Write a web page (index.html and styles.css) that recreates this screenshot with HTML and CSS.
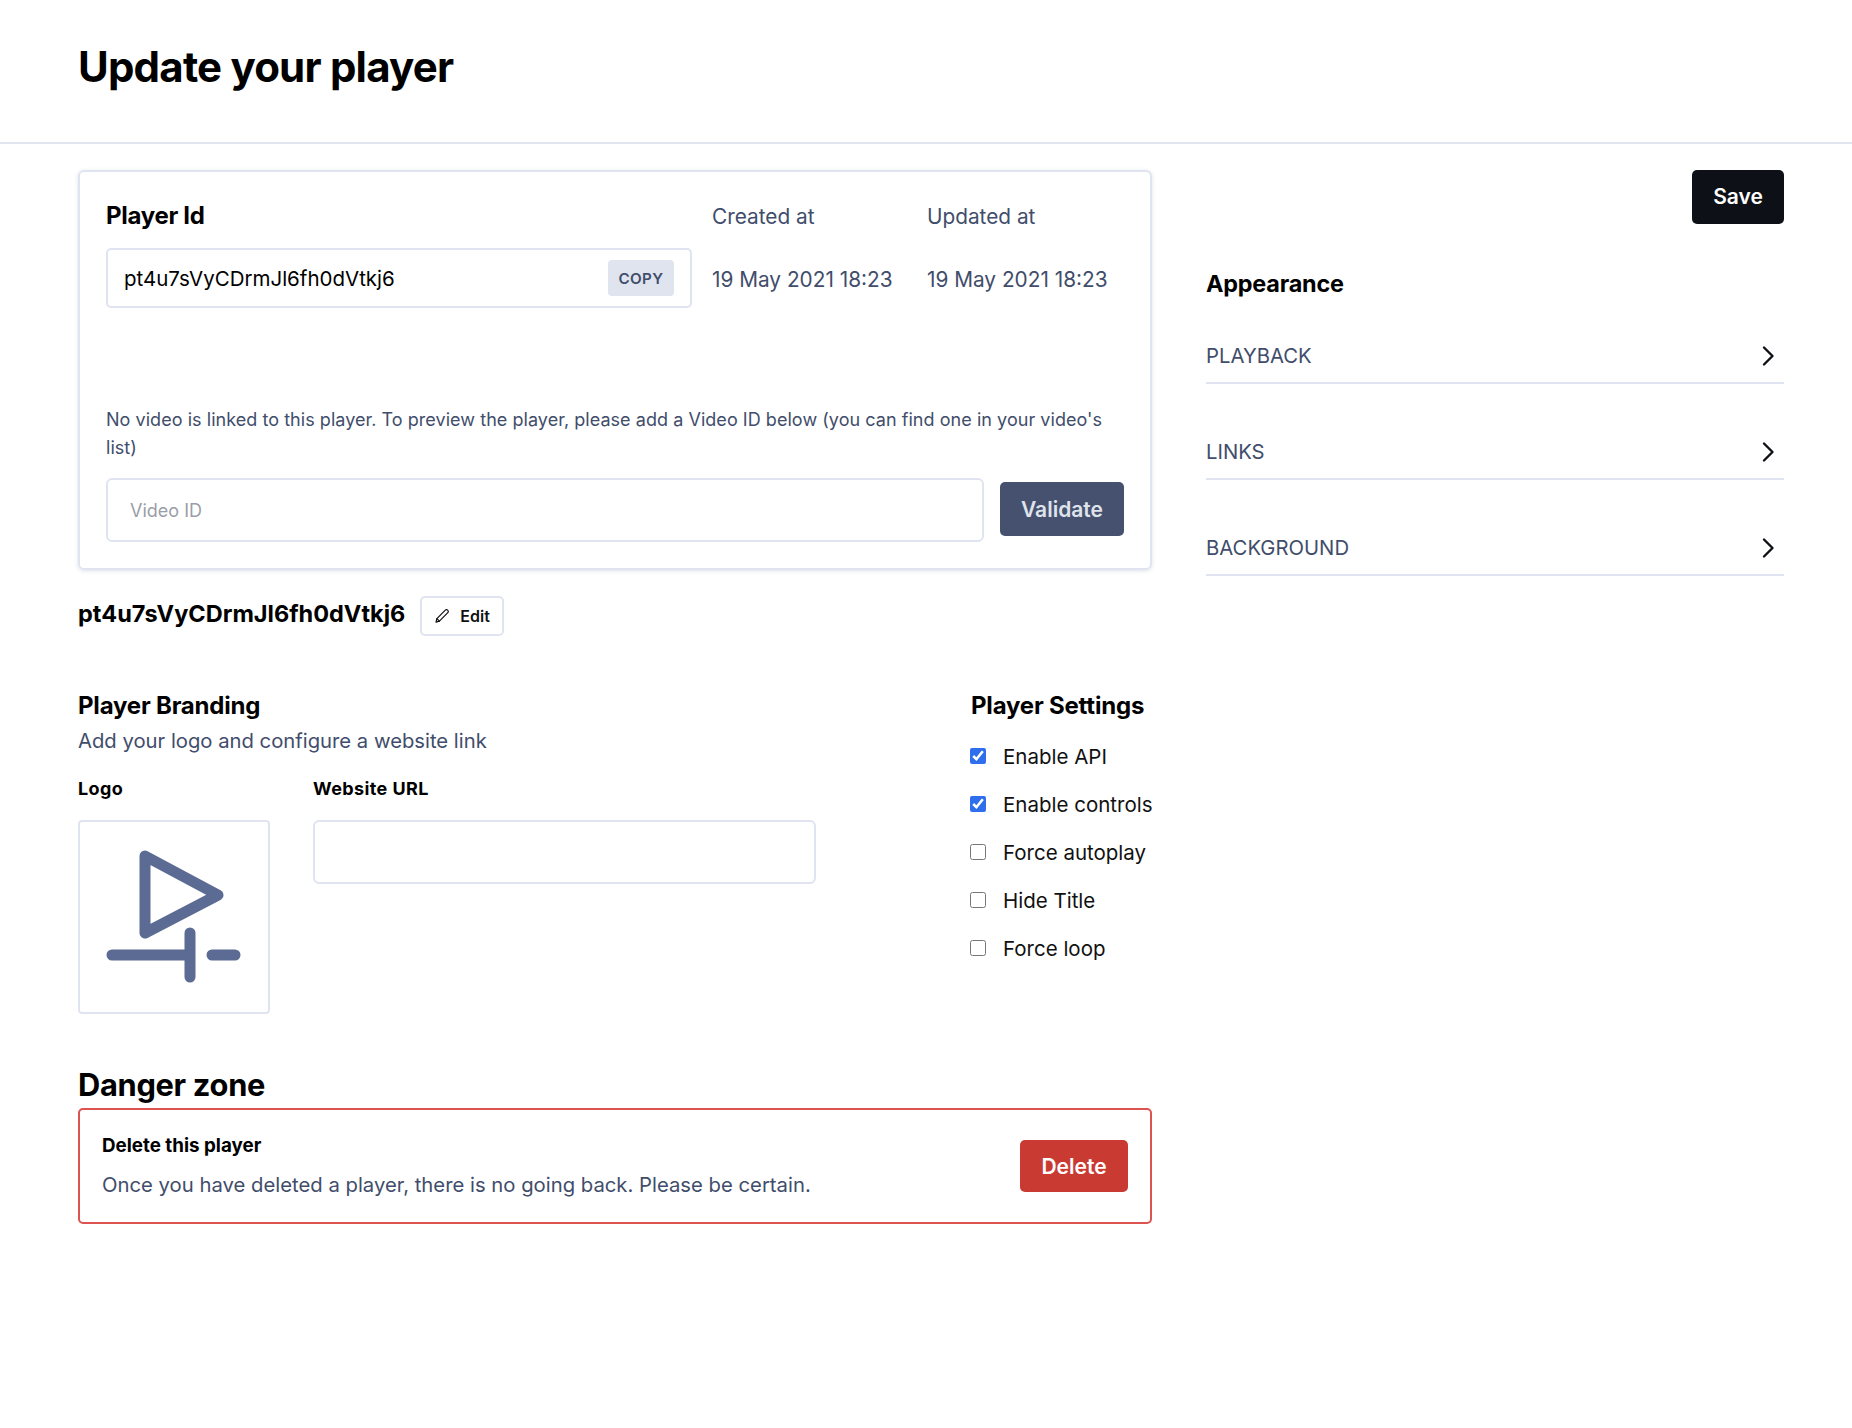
FILE: index.html
```html
<!DOCTYPE html>
<html>
  <head>
    <meta charset="utf-8">
    <title>Update your player</title>
    <link rel="stylesheet" href="styles.css">
  </head>
  <body>
    <header class="page-header">
      <h1>Update your player</h1>
    </header>

    <div class="layout">
      <main class="main">
        <section class="card">
          <div class="info-row">
            <div class="id-col">
              <h3 class="card-label">Player Id</h3>
              <div class="id-box">
                <span class="id-value">pt4u7sVyCDrmJl6fh0dVtkj6</span>
                <button class="copy-btn">COPY</button>
              </div>
            </div>
            <div class="date-col">
              <span class="date-label">Created at</span>
              <span class="date-value">19 May 2021 18:23</span>
            </div>
            <div class="date-col">
              <span class="date-label">Updated at</span>
              <span class="date-value">19 May 2021 18:23</span>
            </div>
          </div>
          <p class="notice">No video is linked to this player. To preview the player, please add a Video ID below (you can find one in your video's list)</p>
          <div class="video-row">
            <input class="text-input video-input" type="text" placeholder="Video ID">
            <button class="btn btn-validate">Validate</button>
          </div>
        </section>

        <div class="name-row">
          <h2 class="player-name">pt4u7sVyCDrmJl6fh0dVtkj6</h2>
          <button class="edit-btn">
            <svg width="16" height="16" viewBox="0 0 16 16" fill="none" stroke="currentColor" stroke-width="1.2" stroke-linejoin="round" stroke-linecap="round">
              <path d="M2 14.2l.9-3.6L11.3 2.2a1.6 1.6 0 0 1 2.3 0l.2.2a1.6 1.6 0 0 1 0 2.3L5.4 13.2z"/>
              <path d="M2.9 10.6l2.5 2.6"/>
            </svg>
            Edit
          </button>
        </div>

        <div class="details">
          <section class="branding">
            <h3 class="section-title">Player Branding</h3>
            <p class="section-sub">Add your logo and configure a website link</p>
            <div class="branding-fields">
              <div class="logo-field">
                <label class="field-label">Logo</label>
                <div class="logo-box">
                  <svg width="188" height="190" viewBox="0 0 188 190" fill="none" stroke="#5c6b93" stroke-width="11" stroke-linecap="round" stroke-linejoin="round">
                    <path d="M65 34L138 73L65 111Z"/>
                    <path d="M32 133H105"/>
                    <path d="M110 111V155"/>
                    <path d="M132 133H155"/>
                  </svg>
                </div>
              </div>
              <div class="url-field">
                <label class="field-label">Website URL</label>
                <input class="text-input url-input" type="text">
              </div>
            </div>
          </section>

          <section class="settings">
            <h3 class="section-title">Player Settings</h3>
            <label class="check-row"><input type="checkbox" checked> Enable API</label>
            <label class="check-row"><input type="checkbox" checked> Enable controls</label>
            <label class="check-row"><input type="checkbox"> Force autoplay</label>
            <label class="check-row"><input type="checkbox"> Hide Title</label>
            <label class="check-row"><input type="checkbox"> Force loop</label>
          </section>
        </div>

        <h2 class="danger-title">Danger zone</h2>
        <section class="danger-box">
          <div>
            <h4 class="danger-label">Delete this player</h4>
            <p class="danger-text">Once you have deleted a player, there is no going back. Please be certain.</p>
          </div>
          <button class="btn btn-delete">Delete</button>
        </section>
      </main>

      <aside class="side">
        <div class="side-actions">
          <button class="btn btn-save">Save</button>
        </div>
        <h3 class="side-title">Appearance</h3>
        <div class="accordion">
          <span>PLAYBACK</span>
          <svg class="chevron" width="24" height="24" viewBox="0 0 24 24" fill="none" stroke="#0d1117" stroke-width="2.4" stroke-linecap="round" stroke-linejoin="round"><path d="M8 3.5L16.5 12L8 20.5"/></svg>
        </div>
        <div class="accordion">
          <span>LINKS</span>
          <svg class="chevron" width="24" height="24" viewBox="0 0 24 24" fill="none" stroke="#0d1117" stroke-width="2.4" stroke-linecap="round" stroke-linejoin="round"><path d="M8 3.5L16.5 12L8 20.5"/></svg>
        </div>
        <div class="accordion">
          <span>BACKGROUND</span>
          <svg class="chevron" width="24" height="24" viewBox="0 0 24 24" fill="none" stroke="#0d1117" stroke-width="2.4" stroke-linecap="round" stroke-linejoin="round"><path d="M8 3.5L16.5 12L8 20.5"/></svg>
        </div>
      </aside>
    </div>
  </body>
</html>
```

FILE: styles.css
```css
* {
  box-sizing: border-box;
}

body {
  margin: 0;
  font-family: Inter, "Liberation Sans", sans-serif;
  color: #000;
  background: #fff;
}

h1, h2, h3, h4, p {
  margin: 0;
}

button {
  font-family: inherit;
  cursor: pointer;
}

.page-header {
  height: 144px;
  padding: 41px 78px 0;
  border-bottom: 2px solid #e0e5ef;
}

.page-header h1 {
  font-size: 42px;
  line-height: 52px;
  font-weight: 700;
  letter-spacing: -0.8px;
}

.layout {
  display: flex;
  gap: 54px;
  padding: 26px 68px 0 78px;
}

.main {
  width: 1074px;
  flex: none;
}

.side {
  flex: 1;
}

/* player card */
.card {
  height: 400px;
  padding: 28px 26px 26px;
  border: 2px solid #dfe4f0;
  border-radius: 6px;
  box-shadow: 0 1px 4px rgba(50, 60, 100, 0.15);
}

.info-row {
  display: flex;
}

.id-col {
  flex: none;
  width: 586px;
  margin-right: 20px;
}

.card-label {
  font-size: 24px;
  line-height: 32px;
  font-weight: 700;
  letter-spacing: -0.3px;
  margin-bottom: 16px;
}

.id-box {
  display: flex;
  align-items: center;
  justify-content: space-between;
  height: 60px;
  padding: 0 16px;
  border: 2px solid #dfe4f0;
  border-radius: 5px;
}

.id-value {
  font-size: 20.5px;
}

.copy-btn {
  width: 66px;
  height: 36px;
  border: 0;
  border-radius: 4px;
  background: #dfe4ee;
  color: #414d6b;
  font-size: 15.2px;
  font-weight: 600;
  letter-spacing: 0.4px;
}

.date-col {
  display: flex;
  flex-direction: column;
  flex: none;
  width: 215px;
  padding-top: 1px;
  color: #414d6b;
  font-size: 20.8px;
  white-space: nowrap;
}

.date-col:last-child {
  width: 197px;
}

.date-label {
  line-height: 32px;
  margin-bottom: 32px;
}

.date-value {
  line-height: 30px;
}

.notice {
  margin-top: 98px;
  color: #414d6b;
  font-size: 18px;
  line-height: 28px;
  letter-spacing: 0.045px;
}

.video-row {
  display: flex;
  align-items: center;
  gap: 16px;
  margin-top: 16px;
}

.text-input {
  border: 2px solid #dfe4f0;
  border-radius: 6px;
  padding: 0 22px;
  font-family: inherit;
  font-size: 18px;
  background: #fff;
  outline: none;
}

.text-input::placeholder {
  color: #9a9ea8;
}

.video-input {
  flex: 1;
  height: 64px;
}

.btn {
  border: 0;
  border-radius: 5px;
  color: #fff;
  font-size: 21px;
  font-weight: 600;
}

.btn-validate {
  width: 124px;
  height: 54px;
  margin-bottom: 2px;
  padding-top: 2px;
  background: #46506f;
  color: #dfe3ec;
}

/* name */
.name-row {
  display: flex;
  align-items: center;
  gap: 15px;
  margin-top: 26px;
}

.player-name {
  font-size: 23.5px;
  line-height: 36px;
  font-weight: 700;
  margin-bottom: 4px;
}

.edit-btn {
  display: flex;
  align-items: center;
  gap: 10px;
  width: 84px;
  height: 40px;
  padding: 0 12px;
  border: 2px solid #dfe4f0;
  border-radius: 5px;
  background: #fff;
  color: #111;
  font-size: 16px;
  font-weight: 600;
}

/* branding and settings */
.details {
  display: flex;
  justify-content: space-between;
  margin-top: 54px;
}

.section-title {
  font-size: 24px;
  line-height: 32px;
  font-weight: 700;
  letter-spacing: -0.2px;
}

.section-sub {
  margin-top: 3px;
  color: #414d6b;
  font-size: 20.25px;
  line-height: 32px;
}

.branding-fields {
  display: flex;
  gap: 43px;
  margin-top: 16px;
}

.field-label {
  display: block;
  font-size: 18px;
  line-height: 32px;
  font-weight: 700;
  letter-spacing: 0.4px;
  margin-bottom: 15px;
}

.logo-box {
  width: 192px;
  height: 194px;
  border: 2px solid #dfe4f0;
  border-radius: 4px;
}

.logo-box svg {
  display: block;
}

.url-input {
  display: block;
  width: 503px;
  height: 64px;
}

.settings {
  width: 181px;
}

.check-row {
  display: flex;
  align-items: center;
  gap: 17px;
  height: 48px;
  font-size: 20.5px;
  color: #111;
  white-space: nowrap;
}

.settings .section-title {
  margin-bottom: 10px;
}

.check-row input {
  flex: none;
  width: 16px;
  height: 16px;
  margin: 0 0 0 -1px;
  accent-color: #2f6fed;
}

/* danger zone */
.danger-title {
  margin-top: 51px;
  font-size: 30.8px;
  line-height: 40px;
  font-weight: 700;
  letter-spacing: -0.3px;
}

.danger-box {
  display: flex;
  align-items: center;
  justify-content: space-between;
  height: 116px;
  margin-top: 3px;
  padding: 0 22px;
  border: 2px solid #dc5350;
  border-radius: 5px;
}

.danger-label {
  font-size: 18.8px;
  line-height: 28px;
  font-weight: 700;
}

.danger-text {
  margin-top: 10px;
  color: #414d6b;
  font-size: 20.3px;
  line-height: 30px;
}

.btn-delete {
  width: 108px;
  height: 52px;
  background: #c93a33;
}

/* appearance */
.side-actions {
  display: flex;
  justify-content: flex-end;
}

.btn-save {
  width: 92px;
  height: 54px;
  padding-bottom: 2px;
  background: #0d1117;
}

.side-title {
  margin-top: 44px;
  font-size: 23.4px;
  line-height: 32px;
  font-weight: 700;
  letter-spacing: -0.2px;
}

.accordion {
  display: flex;
  align-items: center;
  justify-content: space-between;
  height: 48px;
  margin-top: 48px;
  padding: 0 4px 7px 0;
  border-bottom: 2px solid #dfe4f0;
  color: #414d6b;
  font-size: 20.3px;
}

.side-title + .accordion {
  margin-top: 36px;
}
```
